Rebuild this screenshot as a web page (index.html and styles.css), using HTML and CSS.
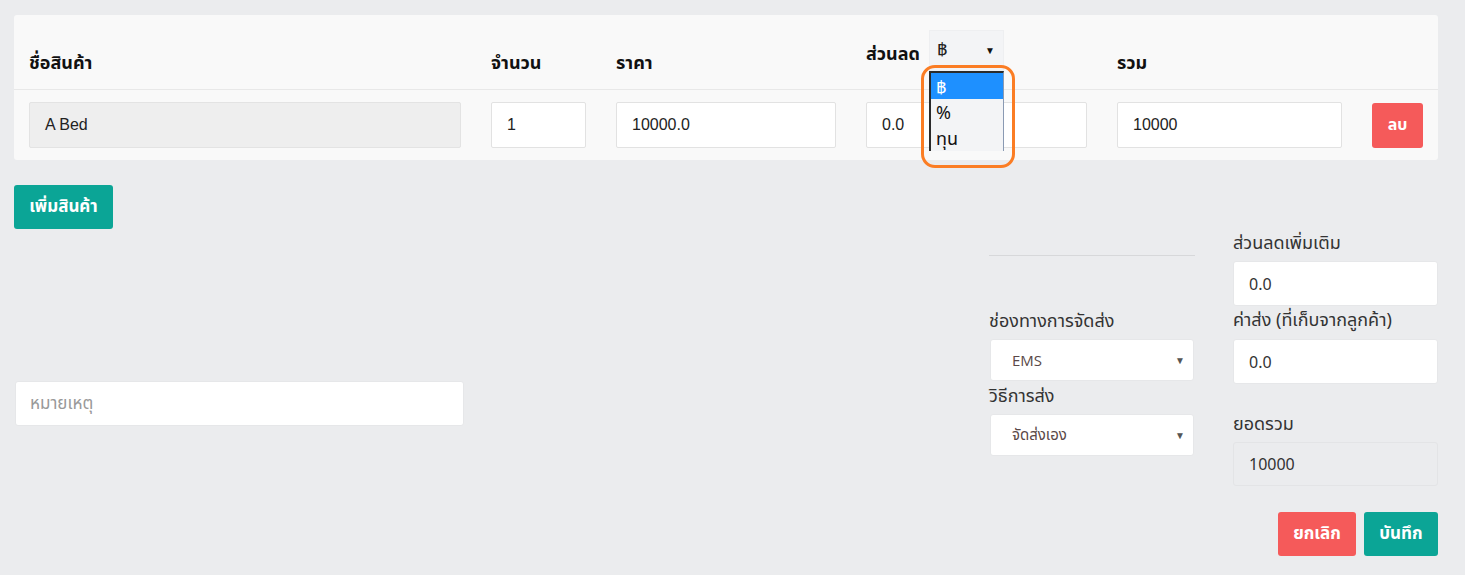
FILE: index.html
```html
<!DOCTYPE html>
<html lang="th">
<head>
<meta charset="utf-8">
<title>Order</title>
<link rel="stylesheet" href="styles.css">
</head>
<body>
<div class="page">
  <div class="card">
    <div class="row head">
      <div class="cell"><span class="th">ชื่อสินค้า</span></div>
      <div class="cell"><span class="th">จำนวน</span></div>
      <div class="cell"><span class="th">ราคา</span></div>
      <div class="cell disc-head">
        <span class="th">ส่วนลด</span>
        <div class="sel-wrap">
          <div class="mini-select"><span class="baht">฿</span><span class="arrow">▼</span></div>
          <ul class="dd">
            <li class="on">฿</li>
            <li>%</li>
            <li>ทุน</li>
          </ul>
          <div class="mark"></div>
        </div>
      </div>
      <div class="cell"><span class="th">รวม</span></div>
      <div class="cell"></div>
    </div>
    <div class="row body">
      <div class="cell"><div class="field disabled">A Bed</div></div>
      <div class="cell"><div class="field">1</div></div>
      <div class="cell"><div class="field">10000.0</div></div>
      <div class="cell"><div class="field">0.0</div></div>
      <div class="cell"><div class="field">10000</div></div>
      <div class="cell"><button class="btn red small">ลบ</button></div>
    </div>
  </div>

  <button class="btn teal add">เพิ่มสินค้า</button>

  <div class="bottom">
    <div class="remark-col">
      <div class="box remark">หมายเหตุ</div>
    </div>
    <div class="col1">
      <div class="hr"></div>
      <div class="label l-ship">ช่องทางการจัดส่ง</div>
      <div class="box select"><span>EMS</span><span class="arrow">▼</span></div>
      <div class="label l-method">วิธีการส่ง</div>
      <div class="box select"><span>จัดส่งเอง</span><span class="arrow">▼</span></div>
    </div>
    <div class="col2">
      <div class="label">ส่วนลดเพิ่มเติม</div>
      <div class="box num">0.0</div>
      <div class="label">ค่าส่ง (ที่เก็บจากลูกค้า)</div>
      <div class="box num">0.0</div>
      <div class="label l-total">ยอดรวม</div>
      <div class="box num total">10000</div>
      <div class="actions">
        <button class="btn red">ยกเลิก</button>
        <button class="btn teal">บันทึก</button>
      </div>
    </div>
  </div>
</div>
</body>
</html>
```

FILE: styles.css
```css
* { box-sizing: border-box; }
html, body { margin: 0; padding: 0; }
body {
  background: #ebecee;
  font-family: "Noto Sans", "Noto Sans Thai", "Liberation Sans", sans-serif;
  color: #333;
  width: 1465px;
  height: 575px;
  overflow: hidden;
}
.page { padding: 15px 27px 0 14px; }

.card {
  background: #f9f9f9;
  border-radius: 3px;
}
.row {
  display: grid;
  grid-template-columns: 462px 125px 250px 251px 255px 81px;
}
.head { height: 75px; border-bottom: 1px solid #e8e8e8; }
.body { height: 70px; }
.cell { padding: 0 15px; display: flex; align-items: center; }
.head .cell { align-items: flex-end; padding-bottom: 15px; }
.th {
  font-size: 18px;
  font-weight: 700;
  line-height: 24px;
  color: #111;
}
.head .disc-head { align-items: flex-end; padding-bottom: 18px; }
.disc-head .th { margin-bottom: 6px; width: 63px; }
.sel-wrap { position: relative; }
.mini-select {
  width: 75px;
  height: 41px;
  background: #f3f4f6;
  border: 1px solid #eeeff1;
  display: flex;
  align-items: center;
  justify-content: space-between;
  padding: 0 8px 2px 7px;
  font-size: 18px;
  color: #222;
}
.mini-select .arrow { font-size: 10px; color: #111; }
.dd {
  position: absolute;
  left: 0;
  top: 41px;
  width: 75px;
  height: 80px;
  margin: 0;
  padding: 0;
  list-style: none;
  background: #f3f4f6;
  border-left: 2px solid #2b2b2b;
  border-top: 2px solid #2b2b2b;
  border-right: 1px solid #8a9ab3;
  z-index: 3;
}
.dd li {
  height: 26px;
  line-height: 26px;
  padding-left: 5px;
  font-size: 18px;
  color: #111;
}
.dd li.on { background: #1e90ff; color: #fff; }
.mark {
  position: absolute;
  left: -8px;
  top: 35px;
  width: 94px;
  height: 103px;
  border: 3px solid #fb7d24;
  border-radius: 14px;
  z-index: 4;
}

.field {
  width: 100%;
  height: 46px;
  background: #fff;
  border: 1px solid #e2e2e2;
  border-radius: 2px;
  font-family: "Liberation Sans", Arial, sans-serif;
  font-size: 16px;
  color: #222;
  display: flex;
  align-items: center;
  padding-left: 15px;
}
.field.disabled { background: #eeeeee; border-color: #e3e3e3; }

.btn {
  border: 0;
  border-radius: 3px;
  color: #fff;
  font-family: "Noto Sans", "Noto Sans Thai", sans-serif;
  font-size: 17px;
  font-weight: 700;
  height: 44px;
  padding: 0 14px;
  cursor: pointer;
}
.btn.red { background: #f55a5a; }
.btn.teal { background: #0ba596; }
.btn.small { width: 52px; height: 45px; padding: 0; font-size: 16px; }
.add { margin-top: 25px; width: 99px; padding: 0; display: block; }

.bottom { display: flex; margin-top: 1px; }
.remark-col { width: 449px; margin-left: 1px; padding-top: 151px; }
.col1 { width: 205px; margin-left: 525px; }
.col2 { width: 205px; margin-left: 39px; }

.box {
  background: #fff;
  border: 1px solid #e6e7e9;
  border-radius: 3px;
  display: flex;
  align-items: center;
  font-size: 16px;
  color: #333;
}
.remark { height: 45px; padding-left: 14px; color: #999; font-size: 17px; }
.hr { margin-top: 25px; height: 1px; background: #d7d8da; margin-right: -1px; }
.label { font-size: 18px; line-height: 24px; color: #333; }
.l-ship { margin-top: 52px; }
.l-method { margin-top: 2px; }
.select {
  height: 42px;
  margin-top: 7px;
  margin-left: 1px;
  justify-content: space-between;
  padding: 0 8px 0 21px;
  color: #5a4848;
  font-family: "Open Sans", "Noto Sans Thai", sans-serif;
  font-size: 15px;
}
.select .arrow { font-size: 10px; color: #555; }
.num { height: 45px; margin-top: 8px; padding-left: 15px; margin-bottom: 1px; }
.col2 .num:nth-of-type(2) { margin-top: 7px; }
.l-total { margin-top: 27px; }
.total { height: 44px; margin-top: 7px; background: #ebecee; border-color: #e3e4e6; }
.actions { display: flex; justify-content: flex-end; gap: 8px; margin-top: 26px; }
.actions .btn.red { width: 78px; padding: 0; }
.actions .btn.teal { width: 74px; padding: 0; }
```
